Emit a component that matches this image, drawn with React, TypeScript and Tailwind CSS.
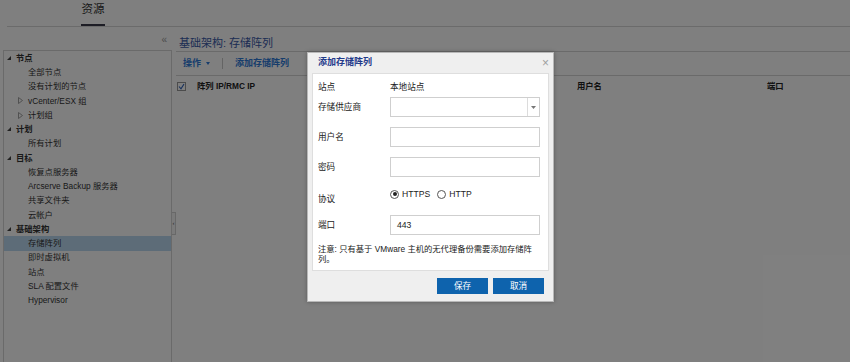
import React from "react"

const FONT = { fontFamily: '"Liberation Sans", Arial, "Noto Sans CJK SC", sans-serif' }

type TreeItem = {
  label: string
  level: 0 | 1
  expandable?: boolean
  selected?: boolean
}

const tree: TreeItem[] = [
  { label: "节点", level: 0 },
  { label: "全部节点", level: 1 },
  { label: "没有计划的节点", level: 1 },
  { label: "vCenter/ESX 组", level: 1, expandable: true },
  { label: "计划组", level: 1, expandable: true },
  { label: "计划", level: 0 },
  { label: "所有计划", level: 1 },
  { label: "目标", level: 0 },
  { label: "恢复点服务器", level: 1 },
  { label: "Arcserve Backup 服务器", level: 1 },
  { label: "共享文件夹", level: 1 },
  { label: "云帐户", level: 1 },
  { label: "基础架构", level: 0 },
  { label: "存储阵列", level: 1, selected: true },
  { label: "即时虚拟机", level: 1 },
  { label: "站点", level: 1 },
  { label: "SLA 配置文件", level: 1 },
  { label: "Hypervisor", level: 1 },
]

function Expanded() {
  return (
    <svg width="4" height="4" viewBox="0 0 4 4">
      <polygon points="4,0 4,4 0,4" fill="#444" />
    </svg>
  )
}

function Collapsed() {
  return (
    <svg width="5" height="7" viewBox="0 0 5 7">
      <polygon points="0.5,0.5 4.5,3.5 0.5,6.5" fill="none" stroke="#999" strokeWidth="0.9" />
    </svg>
  )
}

function TreeRow({ item }: { item: TreeItem }) {
  return (
    <div
      className={
        "flex h-[14.25px] items-center text-[8.3px] text-[#333] " +
        (item.selected ? "bg-[#bad8f0]" : "")
      }
    >
      {item.level === 0 ? (
        <>
          <span className="flex w-[12px] pl-[3px]">
            <Expanded />
          </span>
          <span className="font-bold">{item.label}</span>
        </>
      ) : (
        <>
          <span className="flex w-[12px] ml-[12px] pl-[2px]">{item.expandable && <Collapsed />}</span>
          <span>{item.label}</span>
        </>
      )}
    </div>
  )
}

function Field({ label, children, className = "" }: { label: string; children: React.ReactNode; className?: string }) {
  return (
    <div className={"flex items-center " + className}>
      <span className="w-[72px]">{label}</span>
      {children}
    </div>
  )
}

function Input({ value }: { value?: string }) {
  return (
    <div className="flex h-[20px] w-[150px] items-center border border-[#cfcfcf] bg-white pl-[6px]">
      {value}
    </div>
  )
}

function Radio({ checked, label }: { checked?: boolean; label: string }) {
  return (
    <span className="flex items-center gap-[3px]">
      <span className="flex h-[9px] w-[9px] items-center justify-center rounded-full border border-[#555] bg-white">
        {checked && <span className="h-[4px] w-[4px] rounded-full bg-[#222]" />}
      </span>
      {label}
    </span>
  )
}

function Dialog() {
  return (
    <div className="absolute left-[307px] top-[52px] flex h-[250px] w-[247px] flex-col border border-[#b8b8b8] bg-[#efefef] text-[8.6px] text-[#222] shadow-[0_0_4px_rgba(0,0,0,0.3)]">
      <div className="flex h-[20px] items-center justify-between pl-[10px] pr-[4px]">
        <span className="text-[9px] font-bold text-[#1f3a8a]">添加存储阵列</span>
        <span className="text-[12px] leading-none text-[#a0a0a0]">×</span>
      </div>
      <div className="mx-[4px] h-[198px] border border-[#dedede] bg-white pl-[5px] pr-[2px]">
        <Field label="站点" className="mt-[6px] h-[14px]">
          <span>本地站点</span>
        </Field>
        <Field label="存储供应商" className="mt-[3px]">
          <div className="flex h-[20px] w-[150px] border border-[#cfcfcf]">
            <div className="flex-1" />
            <div className="flex w-[12px] items-center justify-center border-l border-[#dcdcdc]">
              <svg width="5" height="3" viewBox="0 0 5 3">
                <polygon points="0,0 5,0 2.5,3" fill="#777" />
              </svg>
            </div>
          </div>
        </Field>
        <Field label="用户名" className="mt-[10px]">
          <Input />
        </Field>
        <Field label="密码" className="mt-[10px]">
          <Input />
        </Field>
        <div className="mt-[8px] flex h-[24px] items-start">
          <span className="w-[72px] pt-[9px] leading-[10px]">协议</span>
          <div className="flex gap-[7px] pt-[3px]">
            <Radio checked label="HTTPS" />
            <Radio label="HTTP" />
          </div>
        </div>
        <Field label="端口" className="mt-[6px]">
          <Input value="443" />
        </Field>
        <p className="mt-[10px] text-[8.3px] leading-[9.5px]">注意: 只有基于 VMware 主机的无代理备份需要添加存储阵列。</p>
      </div>
      <div className="flex flex-1 items-center justify-end gap-[5px] pr-[9px]">
        <button className="h-[16px] w-[51px] bg-[#0e63ad] text-[8.6px] text-white">保存</button>
        <button className="h-[16px] w-[51px] bg-[#0e63ad] text-[8.6px] text-white">取消</button>
      </div>
    </div>
  )
}

export default function App() {
  return (
    <div className="relative flex h-[362px] w-[850px] flex-col overflow-hidden bg-white" style={FONT}>
      {/* top tabs */}
      <div className="ml-[7px] flex h-[27px] border-b border-[#d6d6d6]">
        <div className="ml-[74px] flex w-[24px] flex-col items-center justify-end border-b-2 border-[#3a3a4a] pb-[6px] text-[11.5px] text-[#333]">
          资源
        </div>
      </div>

      <div className="flex flex-1">
        {/* left tree */}
        <div className="flex w-[172px] flex-col">
          <div className="flex h-[23px] items-end justify-end pb-[3px] pr-[5px] text-[10px] text-[#999]">«</div>
          <div className="ml-[3px] flex-1 border-l border-r border-t border-[#d4d4d4]">
            {tree.map((item) => (
              <TreeRow key={item.label} item={item} />
            ))}
          </div>
        </div>

        {/* splitter */}
        <div className="w-[4px] pt-[185px]">
          <div className="flex h-[23px] items-center justify-center border border-l-0 border-[#d0d0d0] bg-[#f4f4f4] text-[6px] text-[#555]">
            ‹
          </div>
        </div>

        {/* main */}
        <div className="flex flex-1 flex-col">
          <div className="flex h-[24px] items-center pl-[3px] pt-[8px] text-[11px] text-[#3a5aa8]">
            基础架构: 存储阵列
          </div>
          <div className="flex h-[25px] items-center border-b border-t border-[#d4d4d4] pl-[7px] text-[9px] font-bold text-[#2f7ad8]">
            <span>操作</span>
            <svg className="ml-[5px]" width="4" height="3" viewBox="0 0 4 3">
              <polygon points="0,0 4,0 2,3" fill="#2f7ad8" />
            </svg>
            <span className="ml-[12px] h-[11px] w-px bg-[#c8c8c8]" />
            <span className="ml-[12px]">添加存储阵列</span>
          </div>
          <div className="flex h-[20px] items-center text-[8.3px] font-bold text-[#222]">
            <span className="ml-[1px] flex h-[9px] w-[9px] items-center justify-center border border-[#999] bg-white">
              <svg width="7" height="7" viewBox="0 0 7 7">
                <polyline points="1,3.5 3,5.8 6,1" fill="none" stroke="#2b5fb8" strokeWidth="1.1" />
              </svg>
            </span>
            <span className="ml-[11px] w-[380px]">阵列 IP/RMC IP</span>
            <span className="w-[190px]">用户名</span>
            <span>端口</span>
          </div>
        </div>
      </div>

      {/* modal overlay */}
      <div className="absolute inset-0 bg-black/50" />
      <Dialog />
    </div>
  )
}
